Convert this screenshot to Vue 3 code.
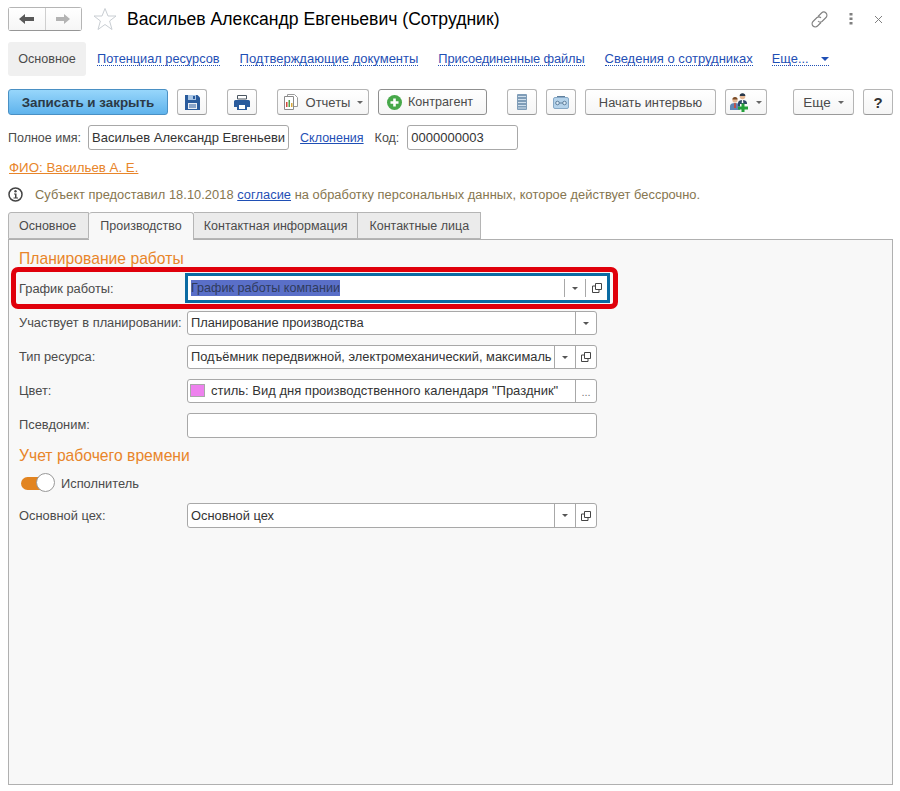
<template>
  <div class="form">
    <header class="head">
      <div class="nav-btns">
        <button class="nav-btn">
          <svg width="16" height="12" viewBox="0 0 16 12"><path d="M0 6 6 1v3h9v4H6v3z" fill="#595959" /></svg>
        </button>
        <button class="nav-btn">
          <svg width="16" height="12" viewBox="0 0 16 12"><path d="M15 6 9 1v3H1v4h8v3z" fill="#b3b3b3" /></svg>
        </button>
      </div>
      <svg class="star" width="24" height="24" viewBox="0 0 24 24">
        <path d="M12 1.500 15 9h8l-6.400 5 2.400 8.500-7-5-7 5 2.400-8.500L1 9h8z" fill="none" stroke="#c9ced3" />
      </svg>
      <h1 class="title">Васильев Александр Евгеньевич (Сотрудник)</h1>
      <div class="head-icons">
        <svg width="17" height="17" viewBox="0 0 17 17" fill="none" stroke="#808080" stroke-width="1.100">
          <path d="M7 5.500 10.500 2a3 3 0 0 1 4.500 4.500L11 10.500a3 3 0 0 1-4-.500" />
          <path d="M10 11.500 6.500 15A3 3 0 0 1 2 10.500L6 6.500a3 3 0 0 1 4 .500" />
        </svg>
        <svg width="4" height="12" viewBox="0 0 4 12" fill="#808080">
          <rect x="0.500" y="0" width="3" height="2.500" /><rect x="0.500" y="4.500" width="3" height="2.500" /><rect x="0.500" y="9" width="3" height="2.500" />
        </svg>
        <svg width="9" height="9" viewBox="0 0 9 9" stroke="#808080"><path d="M1 1l7 7M8 1 1 8" /></svg>
      </div>
    </header>

    <nav class="sections">
      <span class="section-active">Основное</span>
      <a v-for="link in sections" :key="link" class="section-link">{{ link }}</a>
      <a class="section-link more">Еще...<i class="more-arrow"></i></a>
    </nav>

    <div class="toolbar">
      <button class="btn primary">Записать и закрыть</button>
      <button class="btn icon ml9">
        <svg width="15" height="15" viewBox="0 0 15 15"><path d="M0 0h12.500L15 2.500V15H0z" fill="#2a5b9c" /><rect x="3" y="0" width="8" height="5" fill="#a9c6e6" /><rect x="8" y="1" width="2" height="3" fill="#2a5b9c" /><rect x="3" y="8" width="9" height="6" fill="#e9eef5" /><path d="M4 10h7M4 12h7" stroke="#2a5b9c" /></svg>
      </button>
      <button class="btn icon ml20">
        <svg width="16" height="15" viewBox="0 0 16 15"><path d="M3.500 .5h9v3.500h-9z" fill="#fff" stroke="#4a5560" /><path d="M1.500 5h13A1.500 1.500 0 0 1 16 6.500V12h-3V9H3v3H0V6.500A1.500 1.500 0 0 1 1.500 5z" fill="#2a5b9c" /><path d="M3 9h10v6H3z" fill="#2a5b9c" /><path d="M5 10h6v4H5z" fill="#fff" /></svg>
      </button>
      <button class="btn ml20 reports">
        <svg width="16" height="16" viewBox="0 0 16 16"><path d="M4.500 .5h7l3 3v9h-10z" fill="#fff" stroke="#9a9a9a" /><path d="M1.500 2.500h9v13h-9z" fill="#fff" stroke="#8a8a8a" /><path d="M3 8h1.500v5H3z" fill="#d0473a" /><path d="M5.500 6H7v7H5.500z" fill="#4ea24a" /><path d="M8 9h1.500v4H8z" fill="#d9a83a" /></svg>
        Отчеты <i class="caret"></i>
      </button>
      <button class="btn ml9 dark-border contractor">
        <svg width="15" height="15" viewBox="0 0 15 15"><circle cx="7.500" cy="7.500" r="7.500" fill="#47a84a" /><path d="M3.500 6.200h2.700V3.500h2.600v2.700h2.700v2.600H8.800v2.700H6.200V8.800H3.500z" fill="#fff" /></svg>
        Контрагент
      </button>
      <button class="btn icon ml20">
        <svg width="10" height="16" viewBox="0 0 10 16"><rect width="10" height="16" rx="1" fill="#7f9db8" /><path d="M1 2.500h8M1 5.500h8M1 8.500h8M1 11.500h8M1 14h8" stroke="#cfdfec" /></svg>
      </button>
      <button class="btn icon ml9">
        <svg width="16" height="13" viewBox="0 0 16 13"><rect x="0.500" y="1.500" width="15" height="11" rx="1.500" fill="#b4d2ea" stroke="#86a8c6" /><circle cx="4.500" cy="7" r="1.800" fill="#dcebf6" stroke="#5f7f9c" /><circle cx="11.500" cy="7" r="1.800" fill="#dcebf6" stroke="#5f7f9c" /><path d="M6.300 7h3.400M4 .5h8" stroke="#5f7f9c" /></svg>
      </button>
      <button class="btn ml9 interview">Начать интервью</button>
      <button class="btn ml9 people">
        <svg width="20" height="20" viewBox="0 0 20 20">
          <circle cx="5" cy="8" r="2.600" fill="#e6b894" /><path d="M2.400 7.500A2.600 2.600 0 0 1 7.600 7.500z" fill="#7a4a24" />
          <path d="M0 18v-4c0-2 2-3 5-3s5 1 5 3v4z" fill="#5f86b3" /><path d="M4.300 11h1.400l.3 5H4z" fill="#d0473a" />
          <circle cx="12.500" cy="4.500" r="2.800" fill="#e6b894" /><path d="M9.700 4A2.800 2.800 0 0 1 15.300 4z" fill="#27374a" />
          <path d="M8 14v-3c0-2 2-3 4.500-3s4.500 1 4.500 3v1h-7v2z" fill="#2f4866" /><path d="M12 8h1l.3 3h-1.600z" fill="#fff" />
          <path d="M11.500 11.500h3v3h3.500v3h-3.500V20h-3v-2.500H8v-3h3.500z" fill="#24a03a" />
        </svg>
        <i class="caret"></i>
      </button>
      <button class="btn more-btn">Еще <i class="caret"></i></button>
      <button class="btn icon ml9 help">?</button>
    </div>

    <div class="name-row">
      <label>Полное имя:</label>
      <div class="input name-input">Васильев Александр Евгеньеви</div>
      <a class="plain-link decl">Склонения</a>
      <label class="code-label">Код:</label>
      <div class="input code-input">0000000003</div>
    </div>

    <a class="fio">ФИО: Васильев А. Е.</a>

    <div class="consent">
      <svg width="15" height="15" viewBox="0 0 15 15">
        <circle cx="7.500" cy="7.500" r="6.500" fill="none" stroke="#444" stroke-width="1.500" />
        <circle cx="7.500" cy="4.300" r="1.200" fill="#444" />
        <path d="M6 6.500h2.500v4H10v1H5.500v-1H7v-3H6z" fill="#444" />
      </svg>
      <span>Субъект предоставил 18.10.2018 <a class="plain-link">согласие</a> на обработку персональных данных, которое действует бессрочно.</span>
    </div>

    <div class="tabs">
      <div v-for="tab in tabs" :key="tab" class="tab" :class="{ active: tab === 'Производство' }">{{ tab }}</div>
    </div>

    <section class="panel">
      <h2 class="group">Планирование работы</h2>

      <div class="highlight">
        <label class="row-label">График работы:</label>
        <div class="field focused">
          <div class="value"><span class="selected">График работы компании</span></div>
          <div class="cell"><i class="small-caret"></i></div>
          <div class="cell">
            <svg width="10" height="10" viewBox="0 0 10 10" fill="none" stroke="#444"><path d="M3.500 .5h6v6h-6zM3.500 3H.5v6.500h6.500V6.500" /></svg>
          </div>
        </div>
      </div>

      <div class="row first-after">
        <label class="row-label">Участвует в планировании:</label>
        <div class="field">
          <div class="value">Планирование производства</div>
          <div class="cell"><i class="small-caret"></i></div>
        </div>
      </div>

      <div class="row">
        <label class="row-label">Тип ресурса:</label>
        <div class="field">
          <div class="value clip">Подъёмник передвижной, электромеханический, максимальная</div>
          <div class="cell"><i class="small-caret"></i></div>
          <div class="cell">
            <svg width="10" height="10" viewBox="0 0 10 10" fill="none" stroke="#444"><path d="M3.500 .5h6v6h-6zM3.500 3H.5v6.500h6.500V6.500" /></svg>
          </div>
        </div>
      </div>

      <div class="row">
        <label class="row-label">Цвет:</label>
        <div class="field">
          <div class="value color-value">
            <i class="swatch"></i>стиль: Вид дня производственного календаря "Праздник"
          </div>
          <div class="cell dots">...</div>
        </div>
      </div>

      <div class="row alias">
        <label class="row-label">Псевдоним:</label>
        <div class="field tall"><div class="value"></div></div>
      </div>

      <h2 class="group second">Учет рабочего времени</h2>

      <div class="toggle-row">
        <div class="toggle"><span class="knob"></span></div>
        <span>Исполнитель</span>
      </div>

      <div class="row shop">
        <label class="row-label">Основной цех:</label>
        <div class="field tall">
          <div class="value">Основной цех</div>
          <div class="cell"><i class="small-caret"></i></div>
          <div class="cell">
            <svg width="10" height="10" viewBox="0 0 10 10" fill="none" stroke="#444"><path d="M3.500 .5h6v6h-6zM3.500 3H.5v6.500h6.500V6.500" /></svg>
          </div>
        </div>
      </div>
    </section>
  </div>
</template>

<script setup>
const sections = ['Потенциал ресурсов', 'Подтверждающие документы', 'Присоединенные файлы', 'Сведения о сотрудниках']
const tabs = ['Основное', 'Производство', 'Контактная информация', 'Контактные лица']
</script>

<style>
html, body {
  background: #fff;
}
</style>

<style scoped>
.form {
  box-sizing: border-box;
  width: 900px;
  height: 791px;
  padding: 7px 7px 6px 8px;
  display: flex;
  flex-direction: column;
  font-family: "Liberation Sans", Arial, sans-serif;
  font-size: 12.85px;
  color: #4b4b4b;
  background: #fff;
  overflow: hidden;
}
button {
  font-family: inherit;
}

.head {
  height: 24px;
  display: flex;
  align-items: center;
}
.nav-btns {
  display: flex;
  width: 74px;
  height: 24px;
  box-sizing: border-box;
  border: 1px solid #b5b5b5;
  border-bottom-color: #969696;
  border-radius: 3px;
}
.nav-btn {
  flex: 1;
  padding: 0;
  border: 0;
  background: linear-gradient(#fff, #f6f6f6);
  display: flex;
  align-items: center;
  justify-content: center;
}
.nav-btn + .nav-btn {
  border-left: 1px solid #cfcfcf;
}
.star {
  margin-left: 11px;
}
.title {
  margin: 0 0 0 10px;
  padding-top: 1px;
  font-size: 17.6px;
  font-weight: 400;
  color: #000;
}
.head-icons {
  margin-left: auto;
  width: 72px;
  margin-right: 10px;
  display: flex;
  align-items: center;
  justify-content: space-between;
}

.sections {
  margin-top: 11px;
  height: 34px;
  display: flex;
  align-items: center;
}
.section-active {
  width: 78px;
  height: 34px;
  line-height: 34px;
  text-align: center;
  font-size: 12.6px;
  background: #f0f0f0;
  border-radius: 3px;
}
.section-link {
  margin-left: 20px;
  color: #1f4fb5;
  border-bottom: 1px dotted #1f4fb5;
  line-height: 13px;
}
.section-active + .section-link {
  margin-left: 11px;
  font-size: 12.75px;
}
.section-link:nth-child(3) {
  font-size: 13px;
}
.section-link:nth-child(4) {
  letter-spacing: -0.13px;
}
.section-link:nth-child(5) {
  font-size: 13px;
}
.more {
  margin-left: 19px;
  display: flex;
  align-items: center;
}
.more-arrow {
  margin-left: 12px;
  border: 4px solid transparent;
  border-top: 4px solid #1f4fb5;
  border-bottom: 0;
}

.toolbar {
  margin-top: 13px;
  display: flex;
}
.btn {
  box-sizing: border-box;
  height: 26px;
  padding: 0;
  border: 1px solid #b5b5b5;
  border-bottom-color: #9a9a9a;
  border-radius: 3px;
  background: linear-gradient(#fff, #f5f5f5);
  color: #4b4b4b;
  font-size: 12.85px;
  display: flex;
  align-items: center;
  justify-content: center;
}
.btn.primary {
  width: 160px;
  border-color: #4a90c4;
  background: linear-gradient(#97d6fb, #5fb3ec);
  color: #2b3a47;
  font-weight: 700;
  font-size: 13.4px;
}
.btn.icon {
  width: 30px;
}
.ml9 {
  margin-left: 9px;
}
.ml20 {
  margin-left: 20px;
}
.reports {
  width: 92px;
  gap: 7px;
  font-size: 13px;
}
.contractor {
  width: 109px;
  gap: 6px;
  justify-content: flex-start;
  padding-left: 8px;
  font-size: 12.6px;
}
.dark-border {
  border-color: #8f8f8f;
}
.interview {
  width: 131px;
}
.people {
  width: 42px;
  gap: 6px;
}
.more-btn {
  width: 61px;
  margin-left: 26px;
  gap: 7px;
  font-size: 13.5px;
}
.help {
  font-size: 15px;
  font-weight: 700;
  color: #333;
}
.caret {
  border: 3px solid transparent;
  border-top: 3px solid #666;
  border-bottom: 0;
}

.name-row {
  margin-top: 10px;
  height: 25px;
  display: flex;
  align-items: center;
  font-size: 12.5px;
}
.input {
  box-sizing: border-box;
  height: 25px;
  line-height: 23px;
  padding: 0 3px;
  border: 1px solid #a8a8a8;
  border-radius: 3px;
  color: #333;
  white-space: nowrap;
  overflow: hidden;
}
.name-input {
  width: 201px;
  margin-left: 7px;
  font-size: 13px;
}
.code-input {
  width: 111px;
  margin-left: 8px;
  font-size: 13px;
}
.plain-link {
  color: #1f4fb5;
  text-decoration: underline;
}
.decl {
  margin-left: 11px;
}
.code-label {
  margin-left: 11px;
}
.fio {
  margin: 11px 0 0 1px;
  height: 14px;
  line-height: 14px;
  font-size: 13.3px;
  color: #e8852a;
  text-decoration: underline;
}
.consent {
  margin-top: 12px;
  height: 15px;
  display: flex;
  align-items: center;
  gap: 12px;
  letter-spacing: 0.04px;
  color: #86764f;
}

.tabs {
  margin-top: 10px;
  display: flex;
  height: 28px;
  position: relative;
  z-index: 1;
  font-size: 12.5px;
}
.tab {
  box-sizing: border-box;
  height: 27px;
  line-height: 27px;
  padding: 0 10px;
  background: #ebebeb;
  border: 1px solid #b5b5b5;
  border-left: 0;
}
.tab:first-child {
  padding: 0 12px 0 10px;
  border-left: 1px solid #b5b5b5;
  border-radius: 3px 0 0 0;
}
.tab:last-child {
  padding: 0 11px;
}
.tab.active {
  height: 28px;
  padding: 0 11px;
  background: #f8f8f8;
  border-bottom: 0;
  border-radius: 3px 3px 0 0;
}

.panel {
  flex: 1;
  margin-top: -1px;
  padding: 9px 10px;
  background: #f8f8f8;
  border: 1px solid #b0b0b0;
}
.group {
  margin: 0;
  padding-top: 1px;
  font-size: 15.7px;
  line-height: 17px;
  font-weight: 400;
  color: #e8852a;
}
.highlight {
  box-sizing: border-box;
  width: 607px;
  height: 42px;
  margin: 0 0 0 -8px;
  padding: 0 3px 0 3px;
  display: flex;
  align-items: center;
  border: 5px solid #e0000b;
  border-radius: 7px;
}
.row {
  display: flex;
  align-items: center;
  height: 24px;
  margin-top: 10px;
}
.first-after {
  margin-top: 2px;
}
.row-label {
  flex: none;
  width: 168px;
  padding-bottom: 1px;
  white-space: nowrap;
}
.highlight .row-label {
  width: 166px;
  padding-bottom: 0;
}
.shop .row-label {
  padding-bottom: 0;
}
.field {
  box-sizing: border-box;
  flex: none;
  width: 410px;
  height: 100%;
  display: flex;
  background: #fff;
  border: 1px solid #a8a8a8;
  border-radius: 3px;
  color: #333;
}
.field.tall {
  height: 25px;
}
.field.focused {
  width: 425px;
  height: 30px;
  border: 3px solid #0b6ba3;
  border-radius: 0;
}
.value {
  flex: 1;
  min-width: 0;
  padding: 0 3px 1px;
  display: flex;
  align-items: center;
  white-space: nowrap;
  overflow: hidden;
}
.shop .value,
.focused .value {
  padding-bottom: 0;
}
.clip {
  display: block;
  margin-right: 2px;
  line-height: 21px;
}
.color-value {
  font-size: 13px;
}
.selected {
  background: #5a6fc8;
  color: #2f3b5c;
  font-size: 12.6px;
  line-height: 16px;
}
.cell {
  flex: none;
  width: 20px;
  border-left: 1px solid #a8a8a8;
  display: flex;
  align-items: center;
  justify-content: center;
}
.focused .cell {
  margin: 3px 0;
}
.focused .cell:last-child {
  width: 21px;
}
.small-caret {
  border: 3px solid transparent;
  border-top: 3px solid #555;
  border-bottom: 0;
}
.dots {
  align-items: flex-end;
  padding-bottom: 4px;
  font-size: 11px;
  color: #777;
  box-sizing: content-box;
}
.swatch {
  flex: none;
  width: 15px;
  height: 13px;
  margin: 0 6px 0 -1px;
  background: #ee82ee;
  border: 1px solid #a8a8a8;
  box-sizing: border-box;
}
.alias {
  margin-top: 10px;
}
.second {
  margin-top: 9px;
}
.toggle-row {
  margin-top: 9px;
  display: flex;
  align-items: center;
  gap: 6px;
  height: 20px;
  padding-left: 2px;
}
.toggle {
  width: 34px;
  height: 20px;
  position: relative;
  display: flex;
  align-items: center;
}
.toggle::before {
  content: "";
  width: 30px;
  height: 13px;
  border-radius: 7px;
  background: #e28420;
}
.knob {
  position: absolute;
  right: 0;
  top: 0;
  box-sizing: border-box;
  width: 19px;
  height: 19px;
  border-radius: 50%;
  background: #fff;
  border: 1px solid #999;
}
.shop {
  margin-top: 10px;
  height: 25px;
}
</style>
